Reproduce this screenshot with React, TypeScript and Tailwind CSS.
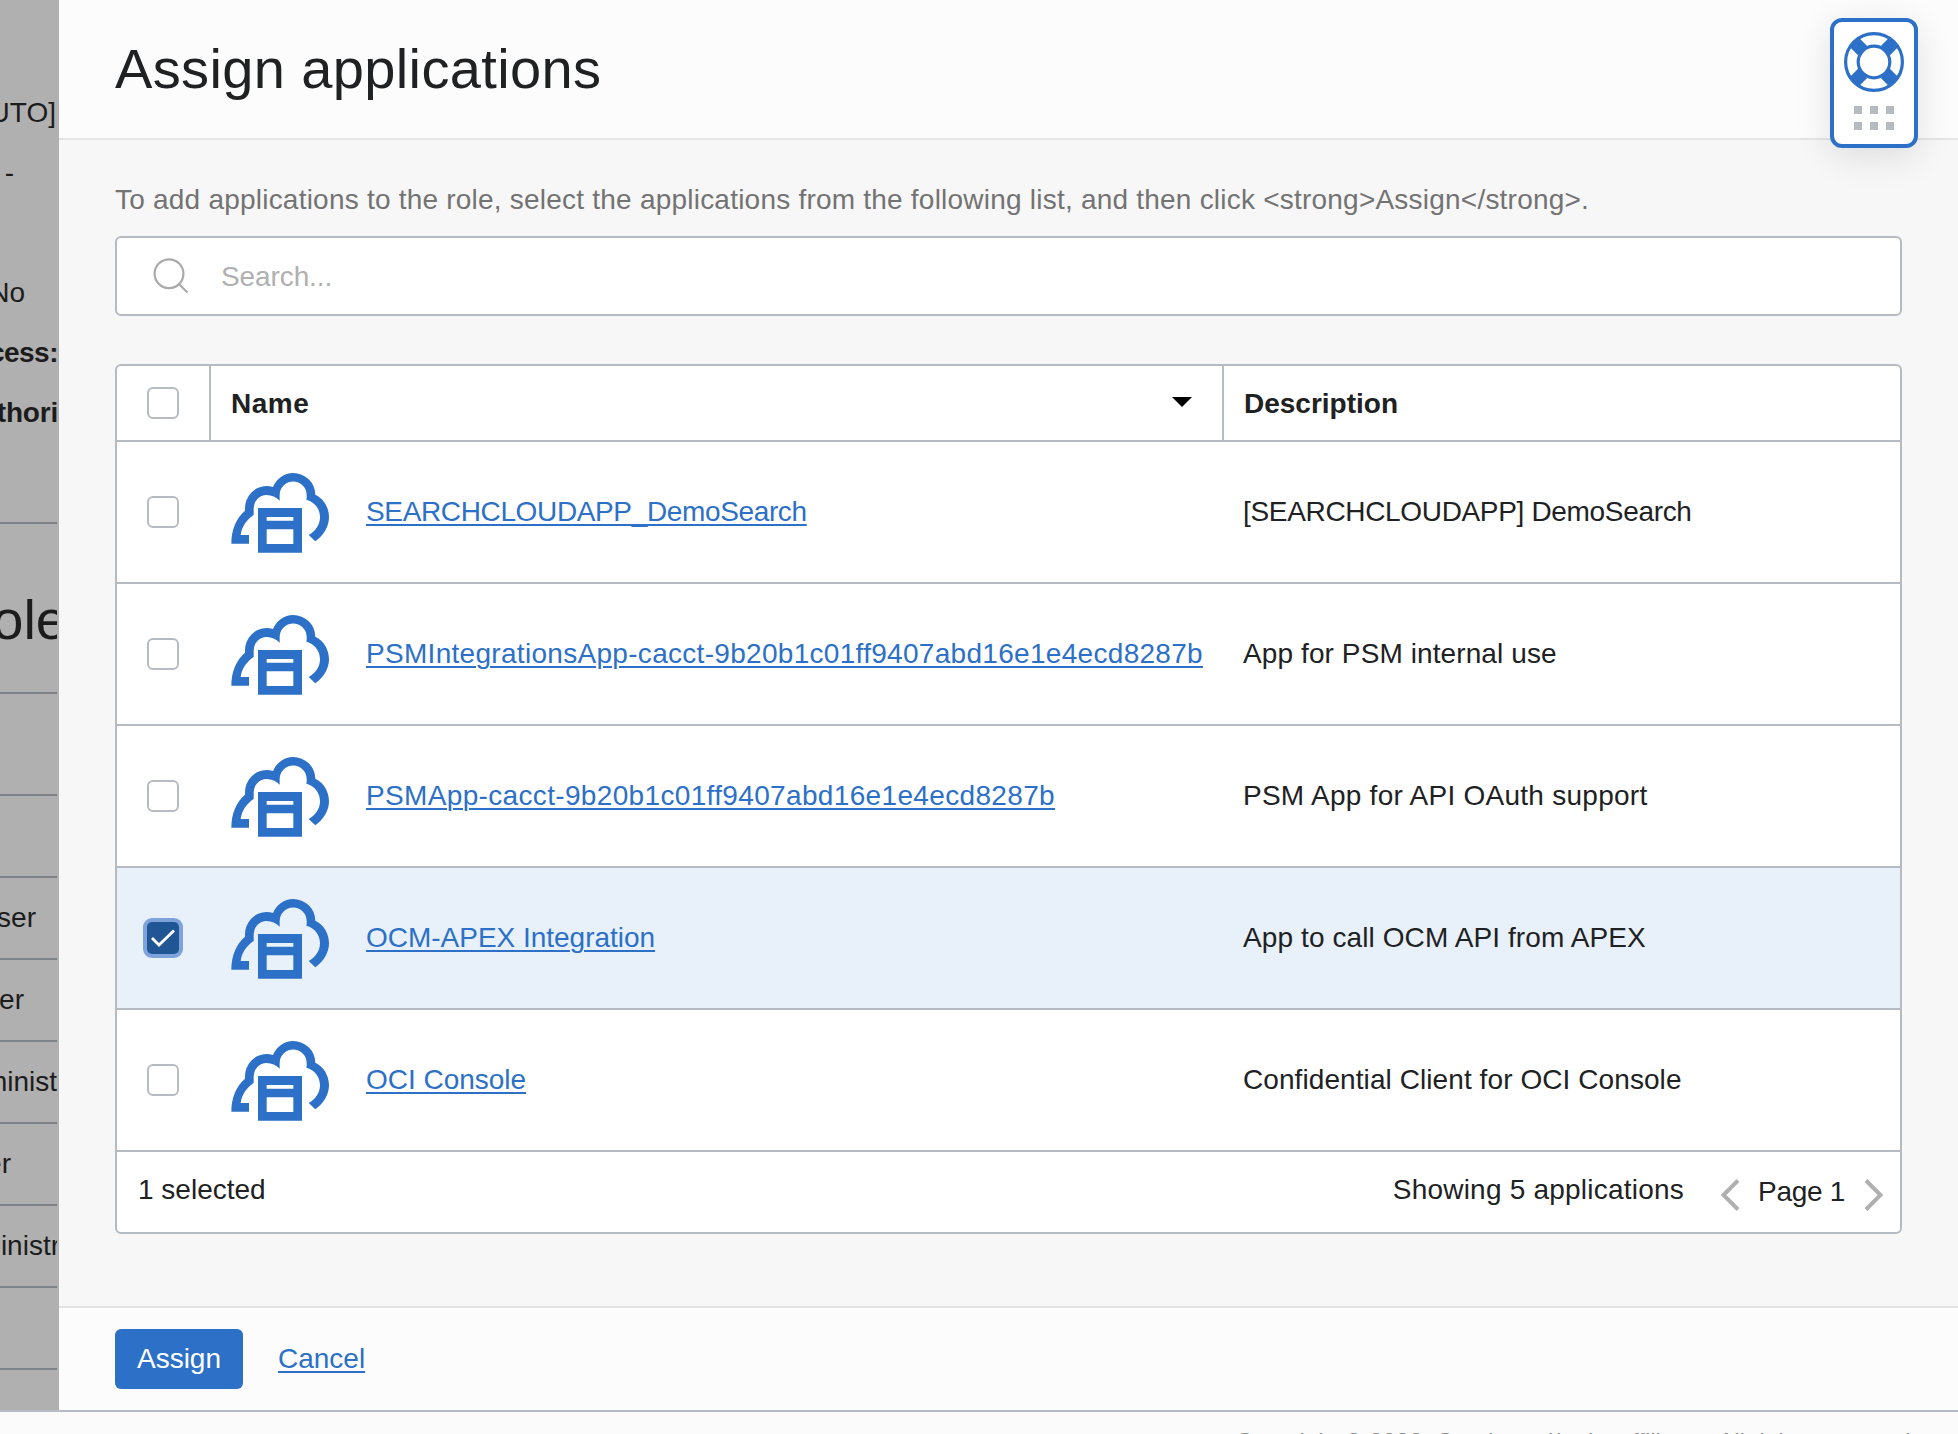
import React from "react";

type AppRow = { name: string; nameClass: string; desc: string; descClass: string; checked?: boolean };

const rows: AppRow[] = [
  { name: "SEARCHCLOUDAPP_DemoSearch", nameClass: "tracking-[-0.36px]", desc: "[SEARCHCLOUDAPP] DemoSearch", descClass: "tracking-[-0.33px]" },
  { name: "PSMIntegrationsApp-cacct-9b20b1c01ff9407abd16e1e4ecd8287b", nameClass: "tracking-[0.3px]", desc: "App for PSM internal use", descClass: "tracking-[0.1px]" },
  { name: "PSMApp-cacct-9b20b1c01ff9407abd16e1e4ecd8287b", nameClass: "tracking-[0.343px]", desc: "PSM App for API OAuth support", descClass: "tracking-[0.26px]" },
  { name: "OCM-APEX Integration", nameClass: "tracking-[-0.02px]", desc: "App to call OCM API from APEX", descClass: "tracking-[0.1px]", checked: true },
  { name: "OCI Console", nameClass: "tracking-[-0.02px]", desc: "Confidential Client for OCI Console", descClass: "tracking-[0.08px]" },
];

function CloudAppIcon() {
  return (
    <svg className="relative top-px block h-[82px] w-[98px] shrink-0" viewBox="48 36 294 246" fill="#2c70c8">
      <path d="M49 251C49 207 64 175 90 152V146A66 67 0 0 1 155 78C162 78 168 79 174 81A66 66 0 0 1 234.5 39A66.5 66 0 0 1 301 104C326 116 342 142 342 172C342 201 325 227 301 244L281 225C301 214 315 195 315 172C315 146 299 126 274 119C276 112 275 108 275 105A40.5 40.5 0 0 0 194 105V122C183 112 170 105 155 105A39 40 0 0 0 116 146V165C95 179 80 200 77 225H102V251Z" />
      <path fillRule="evenodd" d="M129 144H261V278H129ZM155 171V182H235V171ZM155 208V252H235V208Z" />
    </svg>
  );
}

function Checkbox({ checked = false }: { checked?: boolean }) {
  if (checked) {
    return (
      <div className="relative flex h-8 w-8 items-center justify-center rounded-[5px] bg-[#215694] ring-4 ring-[#7ea3dc]">
        <svg className="h-8 w-8" viewBox="0 0 32 32" fill="none" stroke="#fff" strokeWidth="2.8">
          <path d="M5 16L12 23L27 8.5" />
        </svg>
      </div>
    );
  }
  return <div className="h-8 w-8 rounded-md border-2 border-[#b6bac1] bg-white" />;
}

function SupportWidget() {
  return (
    <div className="absolute top-[18px] right-10 flex h-[130px] w-[88px] flex-col items-center rounded-xl border-4 border-[#2c70c8] bg-white pt-2.5 shadow-[0_8px_36px_rgba(0,0,0,0.11)]">
      <svg className="block h-[60px] w-[60px]" viewBox="-30 -30 60 60" fill="none" stroke="#2c70c8">
        <circle r="28.4" strokeWidth="3.2" />
        <circle r="15.8" strokeWidth="3.2" />
        <path strokeWidth="12.8" d="M-19.6 -19.6L-11.4 -11.4M19.6 -19.6L11.4 -11.4M-19.6 19.6L-11.4 11.4M19.6 19.6L11.4 11.4" />
      </svg>
      <div className="mt-3.5 grid grid-cols-3 gap-2">
        {[0, 1, 2, 3, 4, 5].map((i) => (
          <span key={i} className="h-2 w-2 bg-[#b6bac1]" />
        ))}
      </div>
    </div>
  );
}

const details = [
  { text: "UTO]", cls: "pr-[1px]" },
  { text: "-", cls: "pr-[43px]" },
  { text: "", cls: "" },
  { text: "No", cls: "pr-8" },
  { text: "cess:", cls: "font-bold tracking-[-0.5px] -mr-px" },
  { text: "thori", cls: "font-bold tracking-[-0.2px] -mr-px" },
];

const roleRows = [
  { text: "ser", cls: "pr-[21px]" },
  { text: "er", cls: "pr-[33px]" },
  { text: "minist", cls: "" },
  { text: "er", cls: "pr-[46px]" },
  { text: "inistr", cls: "pr-0" },
];

function BackdropPage() {
  return (
    <aside className="w-[59px] shrink-0 bg-[#b0b0b0] pr-0.5 text-[#1c1c1c]">
      <div className="flex h-full w-[57px] flex-col overflow-hidden pt-[82px]">
        {details.map((d, i) => (
          <div key={i} className="flex h-[60px] shrink-0 items-center justify-end pt-0.5">
            <span className={`whitespace-nowrap ${d.cls}`}>{d.text}</span>
          </div>
        ))}
        <div className="mt-20 flex h-[170px] shrink-0 items-center justify-end border-t-2 border-[#7f8387] pt-[23px] text-[56px] leading-none">
          <span className="-mr-2.5 whitespace-nowrap">ole</span>
        </div>
        <div className="h-[102px] shrink-0 border-t-2 border-[#7f8387]" />
        <div className="h-[82px] shrink-0 border-t-2 border-[#7f8387]" />
        {roleRows.map((r, i) => (
          <div key={i} className={`flex h-[82px] shrink-0 items-center justify-end whitespace-nowrap border-t-2 border-[#7f8387] ${r.cls}`}>
            {r.text === "inistr" ? <span className="-mr-[3px]">{r.text}</span> : r.text}
          </div>
        ))}
        <div className="h-[82px] shrink-0 border-t-2 border-[#7f8387]" />
        <div className="flex-1 border-t-2 border-[#7f8387]" />
      </div>
    </aside>
  );
}

export default function App() {
  return (
    <div className="flex h-[1434px] w-[1958px] flex-col overflow-hidden bg-[#fbfbfb] font-['Liberation_Sans',Arial,sans-serif] text-[28px] leading-8 text-[#202123]">
      <div className="flex h-[1410px] shrink-0">
        <BackdropPage />
        <section className="relative flex flex-1 flex-col bg-[#f7f7f7]">
          <header className="flex h-[140px] shrink-0 items-center border-b-2 border-[#e4e4e4] bg-[#fcfcfc] pl-14">
            <h1 className="text-[56px] leading-none tracking-[0.37px]">Assign applications</h1>
          </header>
          <SupportWidget />

          <main className="flex flex-1 flex-col pr-14 pl-14 pt-[44px]">
            <p className="whitespace-nowrap tracking-[0.22px] text-[#737373]">
              {"To add applications to the role, select the applications from the following list, and then click <strong>Assign</strong>."}
            </p>
            <div className="mt-5 flex h-20 w-[1787px] items-center rounded-md border-2 border-[#b6bac1] bg-white pl-9">
              <svg className="block h-10 w-10" viewBox="0 0 40 40" fill="none" stroke="#aaaaaa" strokeWidth="2.2">
                <circle cx="16" cy="17.7" r="14.4" />
                <path d="M26 28L34.5 36.5" />
              </svg>
              <span className="mt-0.5 ml-7 tracking-[-0.1px] text-[#b0b0b0]">Search...</span>
            </div>

            <div className="mt-12 flex w-[1787px] flex-col overflow-hidden rounded-md border-2 border-[#b6bac1] bg-white">
              <div className="flex h-[76px] border-b-2 border-[#b6bac1] font-bold">
                <div className="flex w-[94px] items-center border-r-2 border-[#b6bac1] pl-[30px]">
                  <Checkbox />
                </div>
                <div className="flex w-[1013px] items-center justify-between border-r-2 border-[#b6bac1] pr-[30px] pl-5">
                  <span className="mt-0.5 tracking-[0.5px]">Name</span>
                  <svg className="mb-0.5 block h-2.5 w-5" viewBox="0 0 20 10">
                    <path d="M0 0H20L10 10Z" fill="#000" />
                  </svg>
                </div>
                <div className="flex flex-1 items-center pt-0.5 pl-5">Description</div>
              </div>
              {rows.map((r) => (
                <div key={r.name} className={`flex h-[142px] items-center border-b-2 border-[#b6bac1] ${r.checked ? "bg-[#e8f0fa]" : "bg-white"}`}>
                  <div className="flex w-[94px] pl-[30px]">
                    <Checkbox checked={r.checked} />
                  </div>
                  <div className="flex w-[1013px] items-center pl-5">
                    <CloudAppIcon />
                    <a className={`ml-[37px] whitespace-nowrap text-[#2c70c8] underline decoration-2 underline-offset-[3px] ${r.nameClass}`}>{r.name}</a>
                  </div>
                  <div className={`flex-1 pl-[19px] whitespace-nowrap ${r.descClass}`}>{r.desc}</div>
                </div>
              ))}
              <div className="flex h-20 items-center justify-between pr-4 pl-[21px]">
                <span className="-mt-[5px]">1 selected</span>
                <div className="flex items-center">
                  <span className="-mt-[5px] mr-9 tracking-[0.22px]">Showing 5 applications</span>
                  <svg className="mt-[5px] block h-8 w-5" viewBox="0 0 20 32" fill="none" stroke="#b0b0b0" strokeWidth="4">
                    <path d="M18 1.5L3.5 16L18 30.5" />
                  </svg>
                  <span className="ml-[18px] w-[88px] tracking-[-0.3px]">Page 1</span>
                  <svg className="mt-[5px] ml-[18px] block h-8 w-5" viewBox="0 0 20 32" fill="none" stroke="#b0b0b0" strokeWidth="4">
                    <path d="M2 1.5L16.5 16L2 30.5" />
                  </svg>
                </div>
              </div>
            </div>
          </main>

          <footer className="flex h-[104px] shrink-0 items-center border-t-2 border-[#e4e4e4] bg-[#fcfcfc] pl-14">
            <button className="flex h-[60px] w-32 items-center justify-center rounded-md bg-[#2c70c8] text-white">Assign</button>
            <a className="ml-[35px] tracking-[0px] text-[#2c70c8] underline decoration-2 underline-offset-[3px]">Cancel</a>
          </footer>
        </section>
      </div>
      <div className="flex h-6 shrink-0 justify-end overflow-hidden border-t-2 border-[#b6bac1] pt-[14px] pr-[41px] text-[24px] whitespace-nowrap text-[#8a8a8a]">
        Copyright © 2022, Oracle and/or its affiliates. All rights reserved.
      </div>
    </div>
  );
}
